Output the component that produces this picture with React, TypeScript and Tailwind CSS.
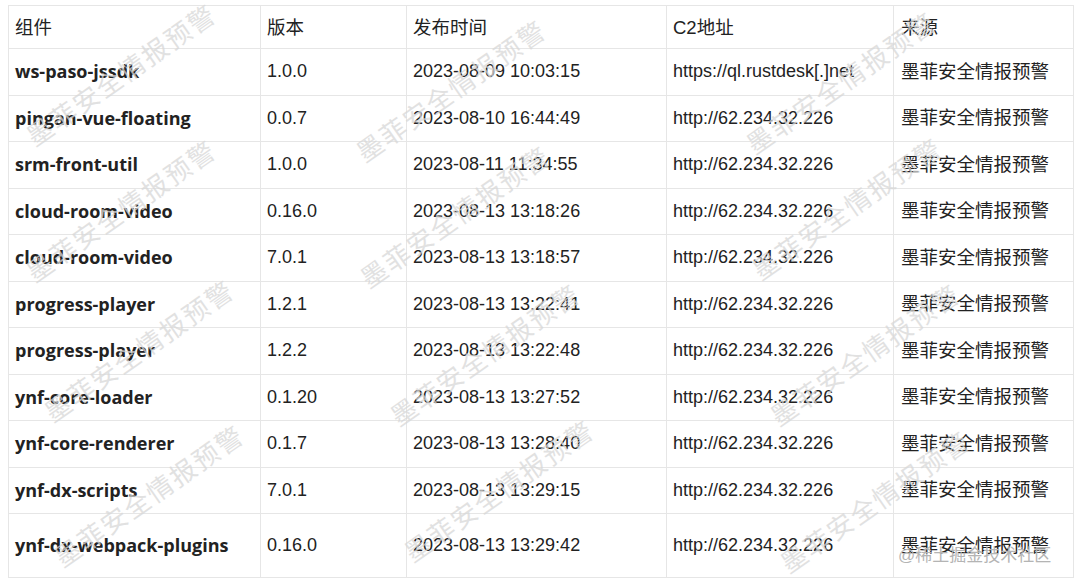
const rows = [
  ["ws-paso-jssdk", "1.0.0", "2023-08-09 10:03:15", "https://ql.rustdesk[.]net"],
  ["pingan-vue-floating", "0.0.7", "2023-08-10 16:44:49", "http://62.234.32.226"],
  ["srm-front-util", "1.0.0", "2023-08-11 11:34:55", "http://62.234.32.226"],
  ["cloud-room-video", "0.16.0", "2023-08-13 13:18:26", "http://62.234.32.226"],
  ["cloud-room-video", "7.0.1", "2023-08-13 13:18:57", "http://62.234.32.226"],
  ["progress-player", "1.2.1", "2023-08-13 13:22:41", "http://62.234.32.226"],
  ["progress-player", "1.2.2", "2023-08-13 13:22:48", "http://62.234.32.226"],
  ["ynf-core-loader", "0.1.20", "2023-08-13 13:27:52", "http://62.234.32.226"],
  ["ynf-core-renderer", "0.1.7", "2023-08-13 13:28:40", "http://62.234.32.226"],
  ["ynf-dx-scripts", "7.0.1", "2023-08-13 13:29:15", "http://62.234.32.226"],
  ["ynf-dx-webpack-plugins", "0.16.0", "2023-08-13 13:29:42", "http://62.234.32.226"],
];

// watermark centres, written out so tailwind picks them up
const marks = [
  "left-[122px] top-[76px]",
  "left-[452px] top-[92px]",
  "left-[842px] top-[84px]",
  "left-[122px] top-[212px]",
  "left-[456px] top-[218px]",
  "left-[848px] top-[210px]",
  "left-[140px] top-[352px]",
  "left-[486px] top-[356px]",
  "left-[866px] top-[356px]",
  "left-[150px] top-[497px]",
  "left-[500px] top-[492px]",
  "left-[876px] top-[503px]",
];

const cell = "border border-[#e6e6e6] pl-[6px] pr-2 align-middle";

export default function App() {
  return (
    <div className="relative min-h-[584px] w-[1080px] overflow-hidden bg-white pl-[8px] pt-[5px] text-[#222] [font-family:'Liberation_Sans','Noto_Sans_CJK_SC',sans-serif]">
      <table className="w-[1065px] table-fixed border-collapse">
        <colgroup>
          <col className="w-[252px]" />
          <col className="w-[146px]" />
          <col className="w-[260px]" />
          <col className="w-[227px]" />
          <col className="w-[180px]" />
        </colgroup>
        <thead>
          <tr className="h-[43px] text-left text-[18.5px]">
            <th className={`${cell} pt-[2px] font-normal`}>组件</th>
            <th className={`${cell} pt-[2px] font-normal`}>版本</th>
            <th className={`${cell} pt-[2px] font-normal`}>发布时间</th>
            <th className={`${cell} pt-[2px] font-normal`}>C2地址</th>
            <th className={`${cell} pl-[7px] pt-[2px] font-normal`}>来源</th>
          </tr>
        </thead>
        <tbody>
          {rows.map((r, i) => (
            <tr
              key={i}
              className={i === rows.length - 1 ? "h-[64px]" : "h-[46.5px]"}
            >
              <td className={`${cell} text-[18px] font-bold [font-family:'Open_Sans',sans-serif]`}>
                {r[0]}
              </td>
              <td className={`${cell} text-[18px]`}>{r[1]}</td>
              <td className={`${cell} text-[18px]`}>{r[2]}</td>
              <td className={`${cell} text-[18px]`}>{r[3]}</td>
              <td className={`${cell} pl-[7px] text-[18.5px]`}>墨菲安全情报预警</td>
            </tr>
          ))}
        </tbody>
      </table>

      {marks.map((m) => (
        <span
          key={m}
          className={`pointer-events-none absolute ${m} -translate-x-1/2 -translate-y-1/2 rotate-[-35deg] whitespace-nowrap text-[26px] tracking-[2px] text-[#d8d8d8] opacity-75`}
        >
          墨菲安全情报预警
        </span>
      ))}

      <span className="pointer-events-none absolute left-[898px] top-[543px] whitespace-nowrap text-[17px] text-[#b4b4b4]">
        @稀土掘金技术社区
      </span>
    </div>
  );
}
